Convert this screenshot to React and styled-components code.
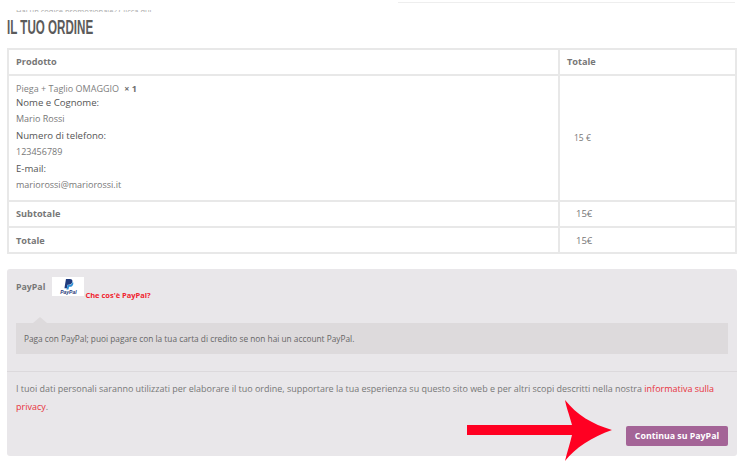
import React from "react";
import styled, { createGlobalStyle } from "styled-components";

const GlobalStyle = createGlobalStyle`
  html, body {
    margin: 0;
    padding: 0;
    background: #fff;
    font-family: "Open Sans", "Liberation Sans", sans-serif;
    color: #777;
  }
`;

const Page = styled.div`
  position: relative;
  width: 750px;
  height: 474px;
  overflow: hidden;
  padding: 0 13px 0 7px;
  box-sizing: border-box;
`;

const TopStrip = styled.div`
  display: flex;
  justify-content: flex-end;
  height: 10px;
  margin-right: 2px;
`;

const TopField = styled.div`
  width: 337px;
  height: 3px;
  border-bottom: 1px solid #eee;
  box-sizing: border-box;
`;

const Cutoff = styled.div`
  height: 2px;
  overflow: hidden;
  margin-left: 9px;
  font-size: 7.5px;
  line-height: 2px;
  color: #aaa;
`;

const Heading = styled.h3`
  margin: 4px 0 13px;
  height: 19px;
  font-family: "Liberation Sans", sans-serif;
  font-size: 20px;
  line-height: 23px;
  font-weight: 700;
  color: #5b5b5b;
  white-space: nowrap;
  transform: scaleX(0.58);
  transform-origin: left center;
`;

const Table = styled.table`
  width: 730px;
  border-collapse: collapse;
  table-layout: fixed;
  border: 2px solid #e8e8e8;
`;

const Cell = styled.td`
  border: 2px solid #e8e8e8;
  padding: 0 7px ${(p) => (p.$lift ? 2 : 0)}px;
  height: ${(p) => p.$height || 26}px;
  font-weight: ${(p) => (p.$bold ? 700 : 400)};
  font-size: ${(p) => (p.$bold ? 9.2 : 9)}px;
  color: #777;
  box-sizing: border-box;
`;

const PriceCell = styled(Cell)`
  padding-left: ${(p) => p.$pad || 16}px;
  font-size: ${(p) => p.$size || 9.5}px;
`;

const ProductLine = styled.div`
  line-height: 13px;
  color: #808080;
`;

const Qty = styled.strong`
  margin-left: 3px;
  color: #6f6f6f;
`;

const FieldLabel = styled.div`
  font-size: 9.6px;
  line-height: 15px;
  color: #555;
`;

const FieldValue = styled.div`
  font-size: 9px;
  line-height: 18px;
  color: #777;
`;

const Payment = styled.div`
  margin-top: 15px;
  height: 187px;
  background: #e9e7ea;
  border-radius: 3px;
  display: flex;
  flex-direction: column;
`;

const MethodRow = styled.div`
  display: flex;
  align-items: flex-start;
  padding: 8px 9px 0;
  height: 47px;
  box-sizing: border-box;
`;

const MethodName = styled.span`
  font-size: 8.8px;
  font-weight: 700;
  line-height: 20px;
  color: #777;
  margin-right: 7px;
`;

const LogoBox = styled.div`
  width: 32px;
  height: 19px;
  background: #fff;
  display: flex;
  flex-direction: column;
  align-items: center;
  justify-content: center;
`;

const LogoWord = styled.span`
  font-family: "Liberation Sans", sans-serif;
  font-size: 5px;
  line-height: 5px;
  font-weight: 700;
  font-style: italic;
  color: #1f3a7d;
`;

const WhatIs = styled.a`
  font-size: 7.5px;
  font-weight: 700;
  color: #f0232f;
  margin-top: 12px;
  margin-left: 1px;
  line-height: 12px;
`;

const Notice = styled.div`
  position: relative;
  margin: 7px 9px 0;
  height: 31px;
  background: #dddadc;
  font-size: 8.3px;
  line-height: 31px;
  padding-left: 8px;
  color: #666;
  &::before {
    content: "";
    position: absolute;
    left: 17px;
    top: -6px;
    border-left: 7px solid transparent;
    border-right: 7px solid transparent;
    border-bottom: 6px solid #dddadc;
  }
`;

const Terms = styled.div`
  margin-top: 17px;
  border-top: 1px solid #dcd9dc;
  padding: 8px 9px 0;
  font-size: 8.97px;
  line-height: 18px;
  color: #777;
`;

const PrivacyLink = styled.a`
  color: #e8323c;
`;

const Actions = styled.div`
  display: flex;
  justify-content: flex-end;
  padding: 10px 9px 0;
`;

const PayButton = styled.button`
  width: 102px;
  height: 20px;
  border: none;
  border-radius: 2px;
  padding: 0;
  background: #a46497;
  color: #fff;
  font-family: inherit;
  font-size: 8.8px;
  font-weight: 700;
`;

const Arrow = styled.svg`
  position: absolute;
  left: 467px;
  top: 400px;
`;

function PaypalMark() {
  return (
    <svg width="11" height="11" viewBox="0 0 12 13">
      <path
        d="M3 0h4.600C10 0 11 1.400 10.600 3.300 10.100 5.600 8.500 6.700 6.300 6.700H4.900L4.100 11H1.200z"
        fill="#1f3a7d"
      />
      <path
        d="M10.900 3.200c.8.700 1 1.700.7 2.900-.5 2-2 3-3.900 3H6.600L6 12.500H3.500l.5-2 .9-3.400h1.400c2.400 0 4-1.300 4.500-3.400z"
        fill="#2c8fd6"
      />
    </svg>
  );
}

export default function App() {
  return (
    <Page>
      <GlobalStyle />
      <TopStrip>
        <TopField />
      </TopStrip>
      <Cutoff>Hai un codice promozionale? Clicca qui</Cutoff>
      <Heading>IL TUO ORDINE</Heading>
      <Table>
        <colgroup>
          <col style={{ width: 551 }} />
          <col />
        </colgroup>
        <tbody>
          <tr>
            <Cell $bold $lift>Prodotto</Cell>
            <Cell $bold $lift>Totale</Cell>
          </tr>
          <tr>
            <Cell $height={126}>
              <ProductLine>
                Piega + Taglio OMAGGIO <Qty>× 1</Qty>
              </ProductLine>
              <FieldLabel>Nome e Cognome:</FieldLabel>
              <FieldValue>Mario Rossi</FieldValue>
              <FieldLabel>Numero di telefono:</FieldLabel>
              <FieldValue>123456789</FieldValue>
              <FieldLabel>E-mail:</FieldLabel>
              <FieldValue>mariorossi@mariorossi.it</FieldValue>
            </Cell>
            <PriceCell $pad={14} $size={8.5} $lift>15 €</PriceCell>
          </tr>
          <tr>
            <Cell $bold $lift>Subtotale</Cell>
            <PriceCell $lift>15€</PriceCell>
          </tr>
          <tr>
            <Cell $bold>Totale</Cell>
            <PriceCell>15€</PriceCell>
          </tr>
        </tbody>
      </Table>
      <Payment>
        <MethodRow>
          <MethodName>PayPal</MethodName>
          <LogoBox>
            <PaypalMark />
            <LogoWord>PayPal</LogoWord>
          </LogoBox>
          <WhatIs>Che cos'è PayPal?</WhatIs>
        </MethodRow>
        <Notice>
          Paga con PayPal; puoi pagare con la tua carta di credito se non hai un account PayPal.
        </Notice>
        <Terms>
          I tuoi dati personali saranno utilizzati per elaborare il tuo ordine, supportare la tua esperienza su questo sito web e per altri scopi descritti nella nostra{" "}
          <PrivacyLink>informativa sulla privacy</PrivacyLink>.
        </Terms>
        <Actions>
          <PayButton>Continua su PayPal</PayButton>
        </Actions>
      </Payment>
      <Arrow width="145" height="62" viewBox="0 0 145 62">
        <path
          d="M0 25H105C102 14 99 6 98 0C110 15 125 24 145 30C125 37 108 48 98 61C100 52 103 44 105 35H0z"
          fill="#ff0022"
        />
      </Arrow>
    </Page>
  );
}
